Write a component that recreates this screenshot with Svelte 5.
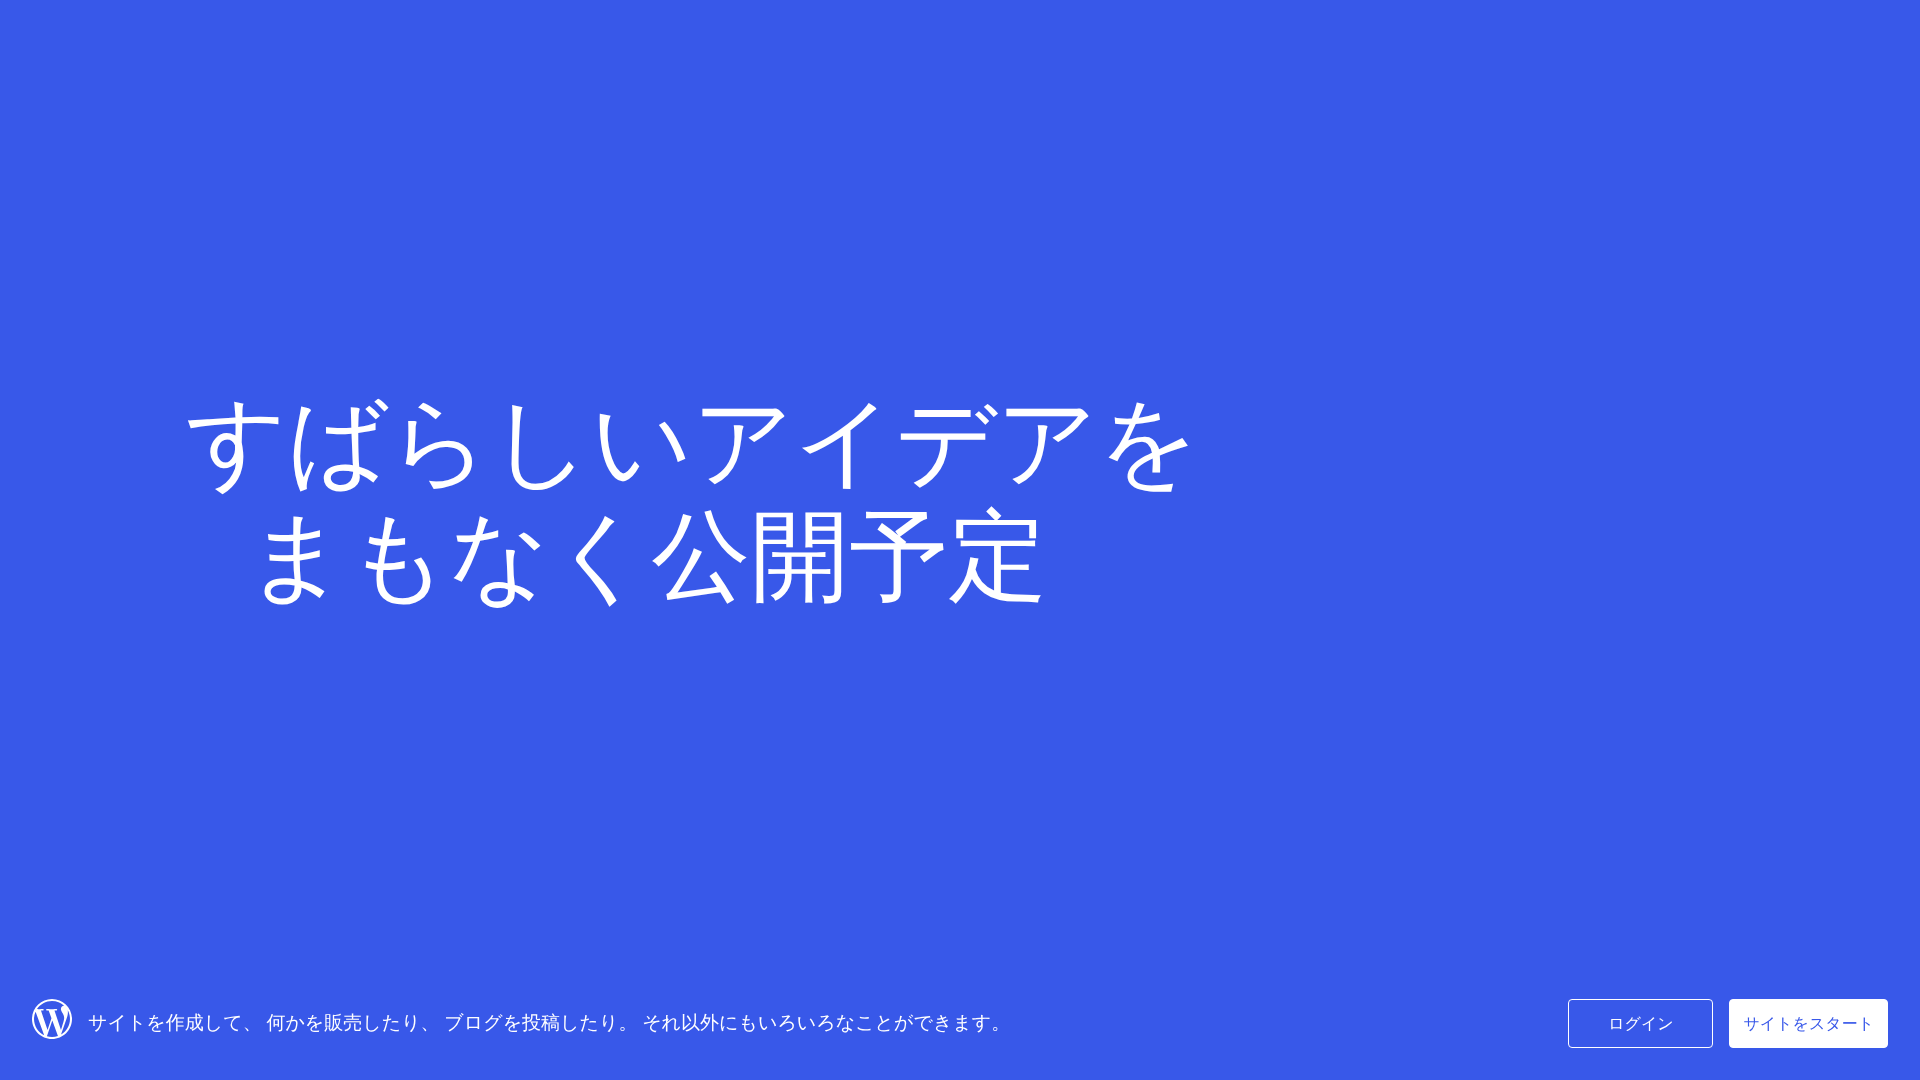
<script>
	const title = ['すばらしいアイデアを', 'まもなく公開予定'];
	const tagline =
		'サイトを作成して、 何かを販売したり、 ブログを投稿したり。 それ以外にもいろいろなことができます。';
</script>

<div class="page">
	<main>
		<h1>
			<span>{title[0]}</span>
			<span class="indent">{title[1]}</span>
		</h1>
	</main>
	<footer>
		<svg class="logo" viewBox="2 2 20 20" aria-hidden="true">
			<path
				d="M12.158 12.786l-2.698 7.84c.806.236 1.657.365 2.54.365 1.047 0 2.051-.18 2.986-.51-.024-.037-.046-.078-.065-.123l-2.762-7.57zM3.009 12c0 3.559 2.068 6.634 5.067 8.092L3.788 8.341C3.289 9.459 3.009 10.696 3.009 12zm15.06-.454c0-1.112-.399-1.881-.741-2.48-.456-.741-.883-1.368-.883-2.109 0-.826.627-1.596 1.51-1.596.04 0 .078.005.116.007C16.472 3.904 14.34 3.009 12 3.009c-3.141 0-5.904 1.612-7.512 4.052.211.007.41.011.579.011.94 0 2.396-.114 2.396-.114.484-.028.541.684.057.741 0 0-.487.057-1.029.085l3.274 9.739 1.968-5.901-1.401-3.838c-.484-.028-.943-.085-.943-.085-.485-.029-.428-.769.057-.741 0 0 1.484.114 2.368.114.94 0 2.397-.114 2.397-.114.485-.028.542.684.057.741 0 0-.488.057-1.029.085l3.249 9.665.897-2.996c.456-1.169.684-2.137.684-2.907zm1.82-3.86c.039.286.06.593.06.924 0 .912-.171 1.938-.684 3.22l-2.746 7.94c2.673-1.558 4.47-4.454 4.47-7.771.001-1.563-.398-3.033-1.1-4.313zM12 22C6.486 22 2 17.514 2 12S6.486 2 12 2s10 4.486 10 10-4.486 10-10 10z"
			/>
		</svg>
		<p>{tagline}</p>
		<nav>
			<a class="button" href="#login">ログイン</a>
			<a class="button primary" href="#start">サイトをスタート</a>
		</nav>
	</footer>
</div>

<style>
	:global(body) {
		margin: 0;
		background: #3858e9;
	}

	.page {
		display: flex;
		flex-direction: column;
		min-height: 100vh;
		color: #fff;
		font-family: Roboto, 'WenQuanYi Zen Hei', 'Noto Sans CJK JP', sans-serif;
	}

	main {
		flex: 1;
		display: flex;
		align-items: center;
		padding: 30px 186px 0;
	}

	h1 {
		margin: 0;
		font-size: 99px;
		line-height: 114px;
		font-weight: 400;
	}

	h1 span {
		display: block;
	}

	.indent {
		padding-left: 60px;
	}

	footer {
		display: flex;
		align-items: flex-start;
		padding: 32px;
	}

	.logo {
		width: 40px;
		height: 40px;
		margin-right: 16px;
		fill: #fff;
	}

	p {
		flex: 1;
		margin: 0;
		font-size: 19px;
		line-height: 48px;
	}

	nav {
		display: flex;
		gap: 16px;
	}

	.button {
		box-sizing: border-box;
		min-width: 145px;
		padding: 12px 13px;
		border: 1px solid #fff;
		border-radius: 4px;
		color: #fff;
		font-size: 16px;
		line-height: 23px;
		text-align: center;
		text-decoration: none;
	}

	.primary {
		background: #fff;
		color: #3858e9;
	}
</style>
